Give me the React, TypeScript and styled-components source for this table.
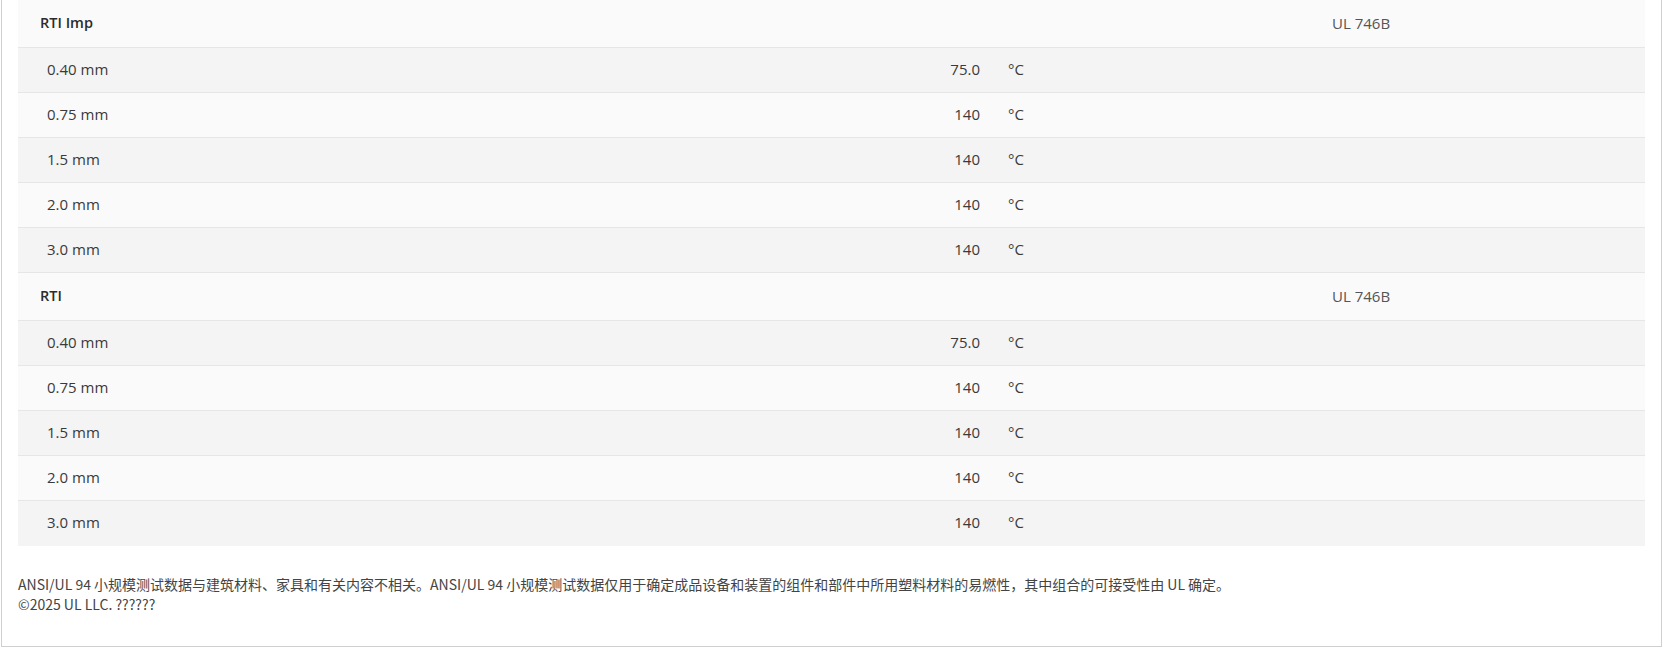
import React from "react";
import styled, { createGlobalStyle } from "styled-components";

const Global = createGlobalStyle`
  html, body { margin: 0; padding: 0; background: #ffffff; }
  body { font-family: "Open Sans", "Noto Sans CJK SC", sans-serif; color: #333; }
`;

const Panel = styled.section`
  margin-left: 1px;
  width: 1661px;
  box-sizing: border-box;
  border: 1px solid #cfcfcf;
  border-top: none;
  padding: 0 16px 32px 16px;
  background: #fff;
`;

const Table = styled.div`
  display: grid;
  grid-template-columns: 600px 374px 328px 1fr;
`;

const Row = styled.div<{ $kind: "head" | "odd" | "even"; $last?: boolean }>`
  display: contents;
  & > div {
    box-sizing: border-box;
    background: ${(p) => (p.$kind === "odd" ? "#f4f4f4" : "#fafafa")};
    height: ${(p) => (p.$kind === "head" ? 48 : 45)}px;
    padding-bottom: 2px;
    border-bottom: 1px solid ${(p) => (p.$last ? "transparent" : "#e6e6e6")};
  }
`;

const Cell = styled.div<{ $align?: "left" | "right"; $pl?: number; $pr?: number; $bold?: boolean; $muted?: boolean }>`
  display: flex;
  align-items: center;
  justify-content: ${(p) => (p.$align === "right" ? "flex-end" : "flex-start")};
  padding-left: ${(p) => p.$pl ?? 0}px;
  padding-right: ${(p) => p.$pr ?? 0}px;
  font-size: ${(p) => (p.$bold ? 14.5 : 15)}px;
  font-weight: ${(p) => (p.$bold ? 600 : 400)};
  color: ${(p) => (p.$bold ? "#2b2b2b" : p.$muted ? "#555" : "#3a3a3a")};
  white-space: nowrap;
`;

const Footer = styled.div`
  margin-top: 28px;
  font-family: "Noto Sans CJK SC", "Noto Sans", sans-serif;
  font-size: 14px;
  line-height: 20px;
  color: #444;
`;

type Group = { title: string; std: string; rows: { t: string; v: string }[] };

const groups: Group[] = [
  {
    title: "RTI Imp",
    std: "UL 746B",
    rows: [
      { t: "0.40 mm", v: "75.0" },
      { t: "0.75 mm", v: "140" },
      { t: "1.5 mm", v: "140" },
      { t: "2.0 mm", v: "140" },
      { t: "3.0 mm", v: "140" },
    ],
  },
  {
    title: "RTI",
    std: "UL 746B",
    rows: [
      { t: "0.40 mm", v: "75.0" },
      { t: "0.75 mm", v: "140" },
      { t: "1.5 mm", v: "140" },
      { t: "2.0 mm", v: "140" },
      { t: "3.0 mm", v: "140" },
    ],
  },
];

export default function App() {
  return (
    <>
      <Global />
      <Panel>
        <Table>
          {groups.map((g, gi) => (
            <React.Fragment key={g.title}>
              <Row $kind="head">
                <Cell $pl={22} $bold>{g.title}</Cell>
                <Cell />
                <Cell />
                <Cell $pl={12} $muted>{g.std}</Cell>
              </Row>
              {g.rows.map((r, i) => (
                <Row
                  key={r.t}
                  $kind={i % 2 === 0 ? "odd" : "even"}
                  $last={gi === groups.length - 1 && i === g.rows.length - 1}
                >
                  <Cell $pl={29}>{r.t}</Cell>
                  <Cell $align="right" $pr={12}>{r.v}</Cell>
                  <Cell $pl={16}>°C</Cell>
                  <Cell />
                </Row>
              ))}
            </React.Fragment>
          ))}
        </Table>
        <Footer>
          ANSI/UL 94 小规模测试数据与建筑材料、家具和有关内容不相关。ANSI/UL 94 小规模测试数据仅用于确定成品设备和装置的组件和部件中所用塑料材料的易燃性，其中组合的可接受性由 UL 确定。
          <br />
          ©2025 UL LLC. ??????
        </Footer>
      </Panel>
    </>
  );
}
